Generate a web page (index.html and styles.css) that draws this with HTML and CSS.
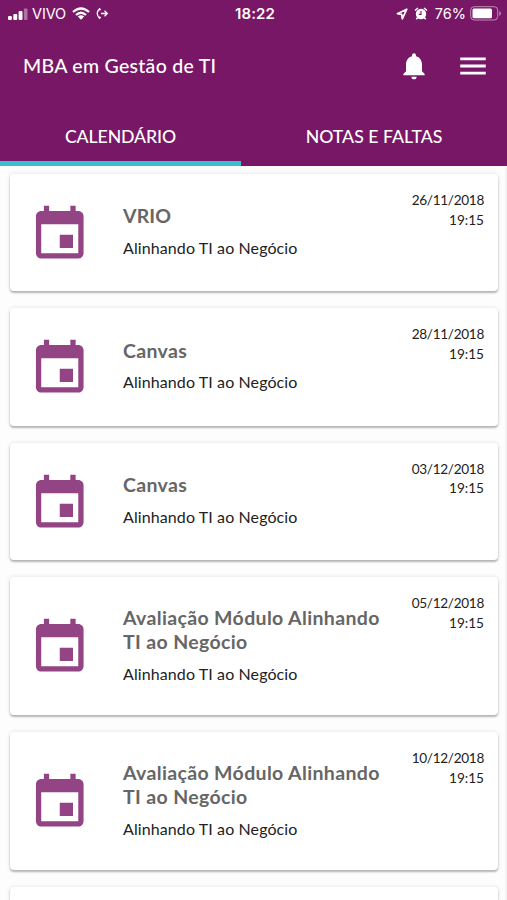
FILE: index.html
```html
<!DOCTYPE html>
<html lang="pt-BR">
<head>
<meta charset="utf-8">
<title>MBA em Gestão de TI</title>
<link rel="stylesheet" href="styles.css">
</head>
<body>
<svg class="defs" aria-hidden="true">
  <symbol id="event" viewBox="0 0 24 24"><path d="M17 12h-5v5h5v-5zM16 1v2H8V1H6v2H5c-1.11 0-1.99.9-1.99 2L3 19c0 1.1.89 2 2 2h14c1.1 0 2-.9 2-2V5c0-1.1-.9-2-2-2h-1V1h-2zm3 18H5V8h14v11z"/></symbol>
</svg>
<header class="header">
  <div class="status">
    <div class="status-left">
      <svg width="20" height="12" viewBox="0 0 20 12"><rect x="0" y="8" width="3.9" height="4" rx="1"/><rect x="5.3" y="6" width="3.9" height="6" rx="1"/><rect x="10.6" y="3" width="3.9" height="9" rx="1"/><rect x="15.9" y="0.5" width="3.6" height="11.5" rx="1" opacity=".4"/></svg>
      <span class="carrier">VIVO</span>
      <svg class="wifi" width="18" height="13" viewBox="0 0 18 13"><path d="M1 5Q9-2 17 5M4 8Q9 3.6 14 8" fill="none" stroke="#fff" stroke-width="2.3"/><path d="M5.800 9.600Q9 7 12.200 9.600L9 12.800z"/></svg>
      <svg class="forward" width="13" height="13" viewBox="0 0 13 13"><path d="M4 1.5C.3 4.5.3 8.500 4 11.500M5 6.500h6M8.500 3.800l2.800 2.700-2.800 2.700" fill="none" stroke="#fff" stroke-width="1.3"/><path d="M3.500.8l1.600 1.700-1.300 1.300L2.300 2.400zM3.500 12.200l1.600-1.700-1.300-1.300-1.500 1.400z"/></svg>
    </div>
    <span class="clock">18:22</span>
    <div class="status-right">
      <svg width="12" height="12" viewBox="0 0 12 12"><path d="M10.800 1.200L1.400 5.700l4.300.6.600 4.500z" fill="none" stroke="#fff" stroke-width="1.700" stroke-linejoin="round"/></svg>
      <svg class="alarm" width="14" height="13" viewBox="0 0 14 13"><circle cx="7" cy="7" r="5.200"/><path d="M1 3.500L4 1M13 3.500L10 1M3.700 10.500l-1.400 1.800M10.300 10.500l1.400 1.800" fill="none" stroke="#fff" stroke-width="1.500"/><path d="M7 4v3.400H4.800" fill="none" stroke="#791767" stroke-width="1.100"/></svg>
      <span class="percent">76%</span>
      <svg class="battery" width="32" height="15" viewBox="0 0 32 15"><rect x=".7" y=".7" width="27" height="13.300" rx="3.500" fill="none" stroke="#fff" stroke-opacity=".5"/><rect x="2.500" y="2.500" width="19.500" height="9.700" rx="1.500"/><path d="M29.300 5v5q1.600-.7 1.600-2.500T29.300 5z" opacity=".5"/></svg>
    </div>
  </div>
  <div class="toolbar">
    <h1>MBA em Gestão de TI</h1>
    <svg class="bell" viewBox="0 0 24 24"><path d="M12 22c1.100 0 2-.9 2-2h-4c0 1.100.89 2 2 2zm6-6v-5c0-3.070-1.640-5.640-4.500-6.320V4c0-.83-.67-1.500-1.500-1.500s-1.500.67-1.500 1.500v.68C7.630 5.360 6 7.920 6 11v5l-2 2v1h16v-1l-2-2z"/></svg>
    <svg class="menu" viewBox="0 0 24 24"><path d="M3 18h18v-2H3v2zm0-5h18v-2H3v2zm0-7v2h18V6H3z"/></svg>
  </div>
  <nav class="tabs">
    <a class="tab active">CALENDÁRIO</a>
    <a class="tab">NOTAS E FALTAS</a>
  </nav>
</header>
<main class="list">
  <article class="card">
    <svg class="event"><use href="#event"/></svg>
    <div class="info"><h2 class="short">VRIO</h2><p>Alinhando TI ao Negócio</p></div>
    <div class="when"><div class="date">26/11/2018</div><div>19:15</div></div>
  </article>
  <article class="card">
    <svg class="event"><use href="#event"/></svg>
    <div class="info"><h2>Canvas</h2><p>Alinhando TI ao Negócio</p></div>
    <div class="when"><div class="date">28/11/2018</div><div>19:15</div></div>
  </article>
  <article class="card">
    <svg class="event"><use href="#event"/></svg>
    <div class="info"><h2>Canvas</h2><p>Alinhando TI ao Negócio</p></div>
    <div class="when"><div class="date">03/12/2018</div><div>19:15</div></div>
  </article>
  <article class="card tall">
    <svg class="event"><use href="#event"/></svg>
    <div class="info"><h2>Avaliação Módulo Alinhando<br>TI ao Negócio</h2><p>Alinhando TI ao Negócio</p></div>
    <div class="when"><div class="date">05/12/2018</div><div>19:15</div></div>
  </article>
  <article class="card tall">
    <svg class="event"><use href="#event"/></svg>
    <div class="info"><h2>Avaliação Módulo Alinhando<br>TI ao Negócio</h2><p>Alinhando TI ao Negócio</p></div>
    <div class="when"><div class="date">10/12/2018</div><div>19:15</div></div>
  </article>
  <article class="card partial"></article>
</main>
</body>
</html>
```
FILE: styles.css
```css
* { box-sizing: border-box; }
body {
  margin: 0;
  height: 900px;
  overflow: hidden;
  background: #fdfdfd;
  font-family: Lato, "Open Sans", sans-serif;
  color: #222;
}
h1, h2, p { margin: 0; }
svg { display: block; flex: none; fill: #fff; }
.defs { position: absolute; width: 0; height: 0; }

.header { height: 166px; background: #791767; color: #fff; }
.status {
  display: grid;
  grid-template-columns: 1fr auto 1fr;
  align-items: center;
  height: 27px;
  padding: 0 5px 0 8px;
  font: 15px/27px Inter, sans-serif;
}
.status-left, .status-right { display: flex; align-items: center; }
.status-right { justify-content: flex-end; }
.carrier { margin-left: 4px; width: 34px; font-size: 14.5px; letter-spacing: -0.1px; }
.wifi { margin-left: 6px; }
.forward { margin-left: 6px; }
.clock { font-weight: 600; font-size: 15px; letter-spacing: 0.1px; }
.alarm { margin-left: 6px; }
.percent { margin: 0 4px 0 7px; font-size: 14.5px; }

.toolbar { display: flex; align-items: center; height: 78px; padding: 0 17px 0 23px; }
h1 { flex: 1; font-weight: 500; font-size: 19.5px; line-height: 28px; letter-spacing: 0.28px; }
.bell { width: 32px; height: 32px; }
.menu { width: 34px; height: 34px; margin-left: 26px; }

.tabs { display: flex; height: 61px; }
.tab {
  flex: 1;
  padding-top: 18px;
  text-align: center;
  font-size: 17.7px;
  line-height: 28px;
  font-weight: 500;
}
.tab.active { flex: none; width: 241px; border-bottom: 5px solid #39bfd5; letter-spacing: -0.1px; }

.list {
  display: flex;
  flex-direction: column;
  gap: 17px;
  height: 734px;
  padding: 8px 7px 0 10px;
  border-right: 2px solid #f3f3f3;
  overflow: hidden;
}
.card {
  flex: none;
  display: flex;
  align-items: center;
  height: 117.4px;
  padding: 0 14px 0 18px;
  border-radius: 4px;
  background: #fff;
  box-shadow: 0 2px 2px rgba(0, 0, 0, .25), 0 0 4px rgba(0, 0, 0, .12);
}
.card.tall { height: 138px; }
.card.partial { height: 13px; border-radius: 4px 4px 0 0; }
.event { width: 63.5px; height: 63.5px; margin-top: 4px; fill: #934484; }
.info { flex: 1; margin: -2px 0 0 31.5px; white-space: nowrap; }
h2 { color: #666; font-size: 19.5px; line-height: 24.5px; font-weight: 700; letter-spacing: 0.35px; }
h2.short { letter-spacing: 0.1px; }
p { margin-top: 8px; font-size: 16px; line-height: 22px; letter-spacing: 0.1px; }
.when {
  align-self: flex-start;
  padding-top: 17px;
  text-align: right;
  font-size: 13.6px;
  line-height: 19.5px;
}
.date { letter-spacing: -0.3px; }
```
